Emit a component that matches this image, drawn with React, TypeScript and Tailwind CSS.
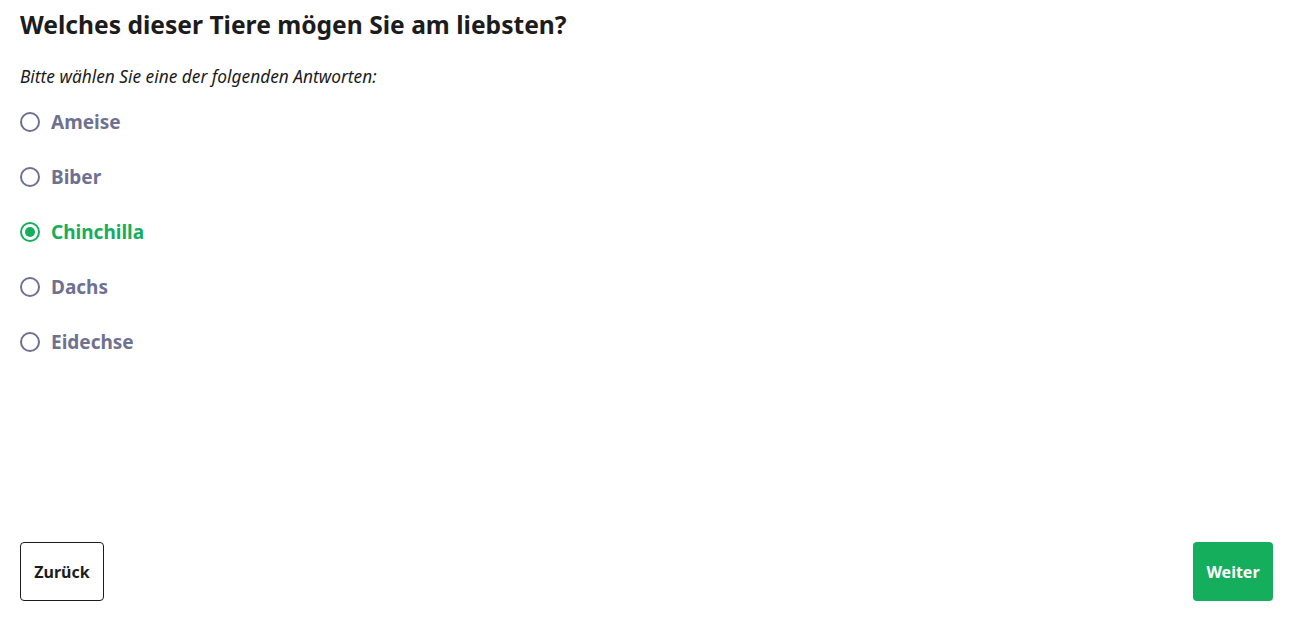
import React, { useState } from "react";

const options = ["Ameise", "Biber", "Chinchilla", "Dachs", "Eidechse"];

export default function App() {
  const [sel, setSel] = useState("Chinchilla");
  return (
    <div className="h-[638px] w-full bg-white flex flex-col justify-between pl-5 pr-[26px] pt-[9px] pb-[37px] text-[#1c1c1c] font-['Noto_Sans',sans-serif]">
      <div className="flex flex-col">
        <h1 className="text-[24.6px] leading-[32px] font-bold">Welches dieser Tiere mögen Sie am liebsten?</h1>
        <p className="mt-[25px] text-[17.3px] leading-[22px] italic">Bitte wählen Sie eine der folgenden Antworten:</p>
        <div className="mt-[20px] flex flex-col gap-[27px]">
          {options.map((o) => {
            const active = sel === o;
            return (
              <label key={o} className="flex items-center gap-[11px] cursor-pointer h-[28px]" onClick={() => setSel(o)}>
                <span className={`w-[20px] h-[20px] rounded-full border-2 flex items-center justify-center ${active ? "border-[#14ae5c]" : "border-[#6e7191]"}`}>
                  {active && <span className="w-[10px] h-[10px] rounded-full bg-[#14ae5c]" />}
                </span>
                <span className={`text-[19px] font-bold ${active ? "text-[#14ae5c]" : "text-[#6e7191]"}`}>{o}</span>
              </label>
            );
          })}
        </div>
      </div>
      <div className="flex justify-between items-end">
        <button className="h-[59px] w-[84px] rounded-[4px] border border-[#1c1c1c] bg-white text-[16px] font-bold">Zurück</button>
        <button className="h-[59px] w-[80px] rounded-[4px] bg-[#14ae5c] text-white text-[16px] font-bold">Weiter</button>
      </div>
    </div>
  );
}
